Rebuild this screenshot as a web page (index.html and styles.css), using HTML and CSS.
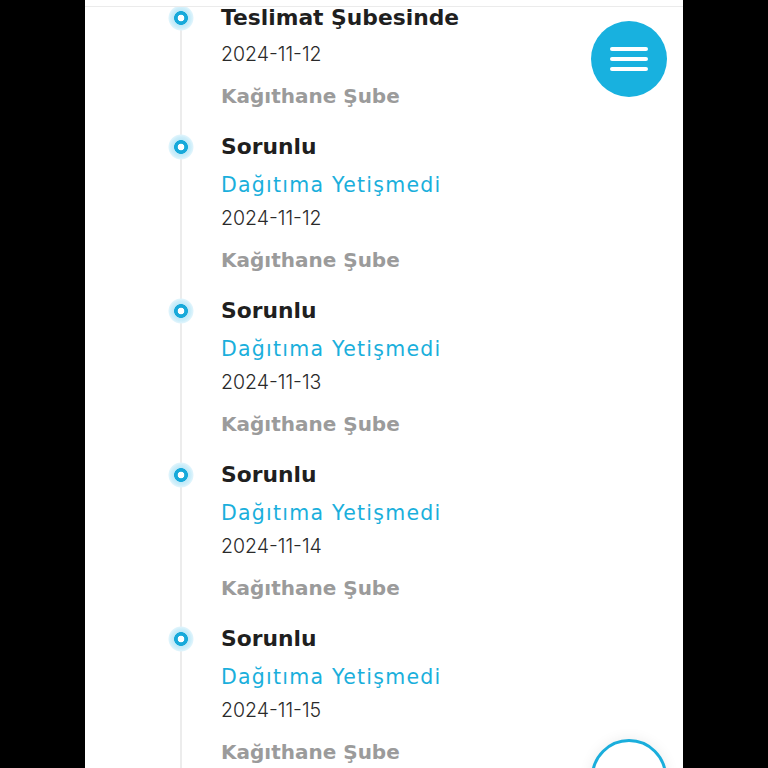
FILE: index.html
```html
<!DOCTYPE html>
<html lang="tr">
<head>
<meta charset="utf-8">
<title>Kargo Takip</title>
<link rel="stylesheet" href="styles.css">
</head>
<body>
<div class="page">
  <div class="topbar"></div>
  <ul class="timeline">
    <li class="item">
      <span class="dot"></span>
      <div class="info">
        <div class="title">Teslimat Şubesinde</div>
        <div class="date">2024-11-12</div>
        <div class="loc">Kağıthane Şube</div>
      </div>
    </li>
    <li class="item">
      <span class="dot"></span>
      <div class="info">
        <div class="title">Sorunlu</div>
        <div class="sub">Dağıtıma Yetişmedi</div>
        <div class="date">2024-11-12</div>
        <div class="loc">Kağıthane Şube</div>
      </div>
    </li>
    <li class="item">
      <span class="dot"></span>
      <div class="info">
        <div class="title">Sorunlu</div>
        <div class="sub">Dağıtıma Yetişmedi</div>
        <div class="date">2024-11-13</div>
        <div class="loc">Kağıthane Şube</div>
      </div>
    </li>
    <li class="item">
      <span class="dot"></span>
      <div class="info">
        <div class="title">Sorunlu</div>
        <div class="sub">Dağıtıma Yetişmedi</div>
        <div class="date">2024-11-14</div>
        <div class="loc">Kağıthane Şube</div>
      </div>
    </li>
    <li class="item">
      <span class="dot"></span>
      <div class="info">
        <div class="title">Sorunlu</div>
        <div class="sub">Dağıtıma Yetişmedi</div>
        <div class="date">2024-11-15</div>
        <div class="loc">Kağıthane Şube</div>
      </div>
    </li>
  </ul>
  <button class="menu-btn" aria-label="Menü">
    <span class="bar"></span><span class="bar"></span><span class="bar"></span>
  </button>
  <button class="up-btn" aria-label="Yukarı">
    <svg width="30" height="30" viewBox="0 0 30 30"><path d="M8 20 L14 12" stroke="#8a8a8a" stroke-width="2.5" fill="none" stroke-linecap="round"/></svg>
  </button>
</div>
</body>
</html>
```

FILE: styles.css
```css
html, body {
  margin: 0;
  padding: 0;
  background: #000;
  height: 768px;
  overflow: hidden;
}

.page {
  position: relative;
  width: 598px;
  margin-left: 85px;
  height: 768px;
  background: #fff;
  overflow: hidden;
  font-family: "DejaVu Sans", Inter, sans-serif;
}

.topbar {
  position: absolute;
  top: 0;
  left: 0;
  right: 0;
  height: 6px;
  background: #fff;
  border-bottom: 1px solid #ebebeb;
  z-index: 2;
}

.timeline {
  list-style: none;
  margin: 0;
  padding: 3px 0 120px 0;
  background-image: linear-gradient(#ececec, #ececec);
  background-repeat: no-repeat;
  background-position: 95px 0;
  background-size: 2px 100%;
}

.item {
  display: grid;
  grid-template-columns: 136px 1fr;
  margin-bottom: 21px;
}

.dot {
  width: 26px;
  height: 26px;
  margin: 2px 0 0 83px;
  border-radius: 50%;
  background: radial-gradient(circle closest-side, #fff 0 3.2px, #17a9da 3.6px 6.6px, #bfe9f8 7.2px, #cdeefa 10px, #dff4fc 12px, rgba(230, 247, 253, 0) 13px);
}

.title {
  font-size: 21.8px;
  font-weight: 700;
  color: #1f1f1f;
  line-height: 30px;
  margin-bottom: 6px;
  white-space: nowrap;
}

.sub {
  font-size: 20.5px;
  font-weight: 400;
  letter-spacing: 1.25px;
  color: #1aafdc;
  line-height: 30px;
  margin-top: 8px;
  margin-bottom: 3px;
  white-space: nowrap;
}

.date {
  font-family: Inter, "DejaVu Sans", sans-serif;
  font-size: 19.5px;
  font-weight: 300;
  color: #2a2a2a;
  line-height: 30px;
}

.loc {
  font-size: 20px;
  font-weight: 700;
  color: #9b9b9b;
  line-height: 30px;
  margin-top: 12px;
  white-space: nowrap;
}

.menu-btn {
  position: absolute;
  top: 21px;
  right: 16px;
  width: 76px;
  height: 76px;
  border: none;
  border-radius: 50%;
  background: #18b1df;
  display: flex;
  flex-direction: column;
  align-items: center;
  justify-content: center;
  gap: 6px;
  padding: 0;
}

.menu-btn .bar {
  display: block;
  width: 38px;
  height: 4px;
  border-radius: 2px;
  background: #fff;
}

.up-btn {
  position: absolute;
  top: 739px;
  right: 16px;
  width: 76px;
  height: 76px;
  border: 3px solid #1aaedc;
  border-radius: 50%;
  background: #fff;
  box-shadow: 0 0 14px rgba(0, 0, 0, 0.08);
  display: flex;
  align-items: flex-start;
  justify-content: center;
  padding: 16px 0 0 0;
  box-sizing: border-box;
}
```
